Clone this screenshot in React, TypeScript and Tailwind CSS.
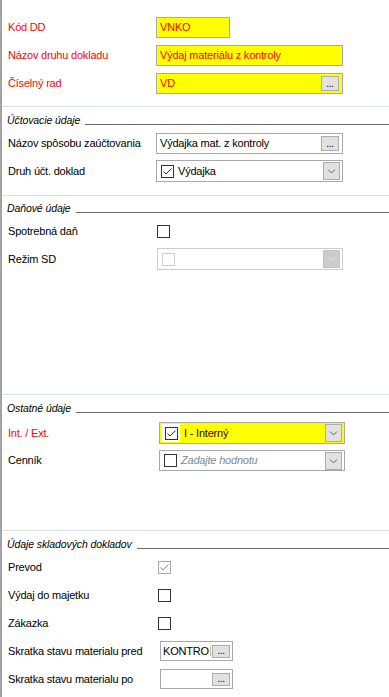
import React from "react";

// Windows-forms style document type detail panel

function Check({ checked = false, disabled = false }: { checked?: boolean; disabled?: boolean }) {
  const border = disabled ? "border-[#a8a8a8]" : "border-[#333333]";
  const stroke = disabled ? "#8a8a8a" : "#333333";
  return (
    <div className={`relative h-[13px] w-[13px] shrink-0 border bg-white ${border}`}>
      {checked && (
        <svg className="absolute left-0 top-0" width="11" height="11" viewBox="0 0 11 11">
          <path d="M1.5 5.5 L4 8 L9.5 2.5" fill="none" stroke={stroke} strokeWidth="1" />
        </svg>
      )}
    </div>
  );
}

function DisabledCheck() {
  return <div className="h-[13px] w-[13px] shrink-0 border border-[#cfcfcf] bg-white" />;
}

function Chevron({ color = "#606060" }: { color?: string }) {
  return (
    <svg width="9" height="6" viewBox="0 0 9 6">
      <path d="M1 1.5 L4.5 5 L8 1.5" fill="none" stroke={color} strokeWidth="1" />
    </svg>
  );
}

function DropButton({ disabled = false }: { disabled?: boolean }) {
  return (
    <div
      className={`flex h-[18px] w-[17px] shrink-0 items-center justify-center border ${
        disabled ? "border-[#c4c4c4] bg-[#cccccc]" : "border-[#adadad] bg-[#e1e1e1]"
      }`}
    >
      <Chevron color={disabled ? "#e8e8e8" : "#606060"} />
    </div>
  );
}

function DotsButton({ h = 15 }: { h?: number }) {
  return (
    <div
      className={`flex w-[18px] shrink-0 items-end justify-center border border-[#adadad] bg-[#e1e1e1] pb-[1px] text-[10px] leading-[10px] text-black ${
        h === 13 ? "h-[13px]" : "h-[15px]"
      }`}
    >
      ...
    </div>
  );
}

function Label({ text, red = false, w }: { text: string; red?: boolean; w: string }) {
  return <div className={`${w} shrink-0 pl-[6px] ${red ? "text-[#ff0000]" : "text-black"}`}>{text}</div>;
}

function Separator({ mt }: { mt: string }) {
  return <div className={`${mt} h-px w-full bg-[#d8dfe7]`} />;
}

function SectionTitle({ text, mt }: { text: string; mt: string }) {
  return (
    <div className={`${mt} flex h-[14px] items-start`}>
      <span className="pl-[5px] text-[10.5px] italic leading-[14px] tracking-[-0.1px] text-black">{text}</span>
      <div className="ml-[5px] mt-[11px] h-px flex-1 bg-[#6b6b6b]" />
    </div>
  );
}

export default function App() {
  return (
    <div className="h-[697px] w-[389px] overflow-hidden border-l-2 border-[#a3a3a3] bg-white font-['Liberation_Sans',Arial,sans-serif] text-[11px] tracking-[-0.2px]">
      <div className="flex flex-col pt-[17px]">
        {/* Hlavička */}
        <div className="flex h-[21px] items-center">
          <Label text="Kód DD" red w="w-[154px]" />
          <div className="flex h-[21px] w-[74px] items-center border border-[#a9a9a9] bg-[#ffff00] pl-[3px] text-[#ff0000]">
            VNKO
          </div>
        </div>
        <div className="mt-[7px] flex h-[21px] items-center">
          <Label text="Názov druhu dokladu" red w="w-[154px]" />
          <div className="flex h-[21px] w-[187px] items-center border border-[#a9a9a9] bg-[#ffff00] pl-[3px] text-[#ff0000]">
            Výdaj materiálu z kontroly
          </div>
        </div>
        <div className="mt-[7px] flex h-[21px] items-center">
          <Label text="Číselný rad" red w="w-[154px]" />
          <div className="flex h-[21px] w-[187px] items-center justify-between border border-[#a9a9a9] bg-[#ffff00] pl-[3px] pr-[3px] text-[#ff0000]">
            <span>VD</span>
            <DotsButton />
          </div>
        </div>

        <Separator mt="mt-[12px]" />

        {/* Účtovacie údaje */}
        <SectionTitle text="Účtovacie údaje" mt="mt-[6px]" />
        <div className="mt-[6px] flex h-[21px] items-center">
          <Label text="Názov spôsobu zaúčtovania" w="w-[154px]" />
          <div className="flex h-[21px] w-[187px] items-center justify-between border border-[#a9a9a9] bg-white pl-[3px] pr-[3px]">
            <span>Výdajka mat. z kontroly</span>
            <DotsButton />
          </div>
        </div>
        <div className="mt-[6px] flex h-[22px] items-center">
          <Label text="Druh účt. doklad" w="w-[154px]" />
          <div className="flex h-[22px] w-[187px] items-center border border-[#a9a9a9] bg-white pl-[4px] pr-[2px]">
            <Check checked />
            <span className="ml-[4px] flex-1">Výdajka</span>
            <DropButton />
          </div>
        </div>

        <Separator mt="mt-[13px]" />

        {/* Daňové údaje */}
        <SectionTitle text="Daňové údaje" mt="mt-[5px]" />
        <div className="mt-[5px] flex h-[22px] items-center">
          <Label text="Spotrebná daň" w="w-[155px]" />
          <Check />
        </div>
        <div className="mt-[6px] flex h-[22px] items-center">
          <Label text="Režim SD" w="w-[155px]" />
          <div className="flex h-[22px] w-[186px] items-center border border-[#cccccc] bg-white pl-[4px] pr-[2px]">
            <DisabledCheck />
            <span className="flex-1" />
            <DropButton disabled />
          </div>
        </div>

        <Separator mt="mt-[124px]" />

        {/* Ostatné údaje */}
        <SectionTitle text="Ostatné údaje" mt="mt-[6px]" />
        <div className="mt-[7px] flex h-[22px] items-center">
          <Label text="Int. / Ext." red w="w-[157px]" />
          <div className="flex h-[22px] w-[186px] items-center border border-[#a9a9a9] bg-[#ffff00] pl-[2px] pr-[2px]">
            <div className="flex h-[18px] w-[18px] items-center justify-center bg-white">
              <Check checked />
            </div>
            <span className="ml-[4px] flex-1 text-[#3a0000]">I - Interný</span>
            <DropButton />
          </div>
        </div>
        <div className="mt-[6px] flex h-[21px] items-center">
          <Label text="Cenník" w="w-[157px]" />
          <div className="flex h-[21px] w-[186px] items-center border border-[#a9a9a9] bg-white pl-[4px] pr-[2px]">
            <Check />
            <span className="ml-[4px] flex-1 italic text-[#7d8a9c]">Zadajte hodnotu</span>
            <DropButton />
          </div>
        </div>

        <Separator mt="mt-[59px]" />

        {/* Údaje skladových dokladov */}
        <SectionTitle text="Údaje skladových dokladov" mt="mt-[6px]" />
        <div className="mt-[5px] flex h-[22px] items-center">
          <Label text="Prevod" w="w-[156px]" />
          <Check checked disabled />
        </div>
        <div className="mt-[6px] flex h-[22px] items-center">
          <Label text="Výdaj do majetku" w="w-[156px]" />
          <Check />
        </div>
        <div className="mt-[6px] flex h-[22px] items-center">
          <Label text="Zákazka" w="w-[156px]" />
          <Check />
        </div>
        <div className="mt-[7px] flex h-[20px] items-center">
          <Label text="Skratka stavu materialu pred" w="w-[158px]" />
          <div className="flex h-[20px] w-[73px] items-center border border-[#a9a9a9] bg-white pl-[2px] pr-[2px]">
            <span className="whitespace-nowrap">KONTRO</span>
            <div className="ml-[1px] h-[10px] w-px bg-[#d9c27a]" />
            <span className="flex-1" />
            <DotsButton h={13} />
          </div>
        </div>
        <div className="mt-[8px] flex h-[20px] items-center">
          <Label text="Skratka stavu materialu po" w="w-[158px]" />
          <div className="flex h-[20px] w-[73px] items-center border border-[#a9a9a9] bg-white pl-[2px] pr-[2px]">
            <span className="flex-1" />
            <DotsButton h={13} />
          </div>
        </div>
      </div>
    </div>
  );
}
